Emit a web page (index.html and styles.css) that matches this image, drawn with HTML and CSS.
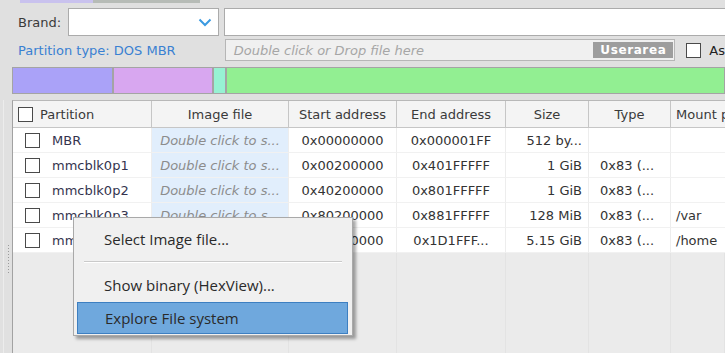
FILE: index.html
```html
<!DOCTYPE html>
<html lang="en">
<head>
    <meta charset="UTF-8">
    <title>Partition table</title>
    <link rel="stylesheet" href="styles.css">
</head>
<body>
    <div class="tabs"><span class="tab"></span><span class="tab tab-next"></span></div>

    <div class="form-row">
        <label class="field-label">Brand:</label>
        <div class="select">
            <svg width="14" height="9" viewBox="0 0 14 9"><polyline points="1.5,1.5 7,7 12.5,1.5" fill="none" stroke="#3b9ae1" stroke-width="2"/></svg>
        </div>
        <div class="text-input"></div>
    </div>

    <div class="form-row row-type">
        <span class="ptype">Partition type: DOS MBR</span>
        <div class="drop-field">
            <span class="placeholder">Double click or Drop file here</span>
            <span class="badge">Userarea</span>
        </div>
        <span class="check"></span>
        <span class="check-label">As</span>
    </div>

    <div class="partbar">
        <span class="seg seg-a"></span>
        <span class="seg seg-b"></span>
        <span class="seg seg-c"></span>
        <span class="seg seg-d"></span>
    </div>

    <div class="grid-area">
        <div class="gutter"><span class="grip"></span></div>
        <div class="table">
            <div class="tr thead">
                <div class="th th-part"><span class="check"></span>Partition</div>
                <div class="th">Image file</div>
                <div class="th">Start address</div>
                <div class="th">End address</div>
                <div class="th">Size</div>
                <div class="th">Type</div>
                <div class="th th-left">Mount point</div>
            </div>
            <div class="tr">
                <div class="td td-part"><span class="check"></span>MBR</div>
                <div class="td td-image">Double click to s...</div>
                <div class="td">0x00000000</div>
                <div class="td">0x000001FF</div>
                <div class="td td-size">512 by...</div>
                <div class="td td-type"></div>
                <div class="td td-mount"></div>
            </div>
            <div class="tr">
                <div class="td td-part"><span class="check"></span>mmcblk0p1</div>
                <div class="td td-image">Double click to s...</div>
                <div class="td">0x00200000</div>
                <div class="td">0x401FFFFF</div>
                <div class="td td-size">1 GiB</div>
                <div class="td td-type">0x83 (...</div>
                <div class="td td-mount"></div>
            </div>
            <div class="tr">
                <div class="td td-part"><span class="check"></span>mmcblk0p2</div>
                <div class="td td-image">Double click to s...</div>
                <div class="td">0x40200000</div>
                <div class="td">0x801FFFFF</div>
                <div class="td td-size">1 GiB</div>
                <div class="td td-type">0x83 (...</div>
                <div class="td td-mount"></div>
            </div>
            <div class="tr">
                <div class="td td-part"><span class="check"></span>mmcblk0p3</div>
                <div class="td td-image">Double click to s...</div>
                <div class="td">0x80200000</div>
                <div class="td">0x881FFFFF</div>
                <div class="td td-size">128 MiB</div>
                <div class="td td-type">0x83 (...</div>
                <div class="td td-mount">/var</div>
            </div>
            <div class="tr">
                <div class="td td-part"><span class="check"></span>mmcblk0p5</div>
                <div class="td td-image">Double click to s...</div>
                <div class="td">0x88200000</div>
                <div class="td">0x1D1FFF...</div>
                <div class="td td-size">5.15 GiB</div>
                <div class="td td-type">0x83 (...</div>
                <div class="td td-mount">/home</div>
            </div>
            <div class="tr filler">
                <div class="tf"></div><div class="tf"></div><div class="tf"></div><div class="tf"></div>
                <div class="tf"></div><div class="tf"></div><div class="tf"></div>
            </div>
        </div>
    </div>

    <!-- right-click menu over the table -->
    <div class="context-menu">
        <div class="menu-item item-first">Select Image file...</div>
        <div class="menu-sep"></div>
        <div class="menu-item">Show binary (HexView)...</div>
        <div class="menu-item menu-active">Explore File system</div>
    </div>
</body>
</html>
```

FILE: styles.css
```css
html, body {
    margin: 0;
    padding: 0;
}
body {
    position: relative;
    width: 725px;
    height: 353px;
    overflow: hidden;
    background-color: #e0e0e0;
    font-family: "DejaVu Sans", sans-serif;
    font-size: 13px;
    color: #333;
}

/* top tab strip, mostly cut off */
.tabs {
    display: flex;
    height: 3px;
    padding-left: 20px;
}
.tab {
    width: 73px;
    background-color: #c9c2ee;
}
.tab-next {
    width: 107px;
    background-color: #b7bcb7;
}

/* form rows */
.form-row {
    display: flex;
    align-items: center;
    margin-top: 5px;
    height: 28px;
}
.field-label {
    width: 50px;
    padding-left: 18px;
    color: #3a3a3a;
}
.select {
    width: 151px;
    height: 28px;
    box-sizing: border-box;
    background-color: #fff;
    border: 1px solid #ababab;
    display: flex;
    align-items: center;
    justify-content: flex-end;
    padding-right: 6px;
}
.text-input {
    flex: 1;
    margin-left: 5px;
    height: 28px;
    box-sizing: border-box;
    background-color: #fff;
    border: 1px solid #ababab;
    border-right: none;
}
.row-type {
    margin-top: 3px;
    height: 22px;
}
.ptype {
    width: 207px;
    padding-left: 18px;
    color: #3a80d2;
}
.drop-field {
    width: 451px;
    height: 22px;
    box-sizing: border-box;
    border: 1px solid #b6b6b6;
    background-color: #f0f0f0;
    display: flex;
    align-items: center;
    justify-content: space-between;
    padding: 0 1px 0 8px;
}
.placeholder {
    font-style: italic;
    color: #a6a6a6;
}
.badge {
    width: 80px;
    height: 16px;
    line-height: 16px;
    text-align: center;
    background-color: #9d9d9d;
    color: #fff;
    font-weight: bold;
    font-size: 12px;
    letter-spacing: 0.6px;
}
.check {
    display: inline-block;
    width: 15px;
    height: 15px;
    box-sizing: border-box;
    border: 1px solid #4a4a4a;
    background-color: #fff;
    flex-shrink: 0;
}
.row-type .check {
    margin-left: 11px;
}
.check-label {
    margin-left: 8px;
    color: #222;
}

/* partition bar */
.partbar {
    display: flex;
    gap: 2px;
    margin: 6px 0 0 12px;
    height: 27px;
    box-sizing: border-box;
    padding: 1px;
    background-color: #a4a4a4;
}
.seg-a { width: 99px; background-color: #aaa2f8; }
.seg-b { width: 98px; background-color: #d8a7f0; }
.seg-c { width: 11px; background-color: #97f2d3; }
.seg-d { flex: 1; background-color: #92ef92; }

/* table */
.grid-area {
    display: flex;
    margin-top: 6px;
    height: 253px;
}
.gutter {
    position: relative;
    width: 9px;
    flex-shrink: 0;
    border-left: 1px solid #ececec;
    margin-left: 3px;
    box-sizing: border-box;
}
.grip {
    position: absolute;
    left: 4px;
    top: 145px;
    width: 1px;
    height: 28px;
    background-image: linear-gradient(#9a9a9a 50%, transparent 50%);
    background-size: 1px 3px;
}
.table {
    flex: 1;
    display: flex;
    flex-direction: column;
    border-left: 1px solid #a2a2a2;
    border-top: 1px solid #b8b8b8;
    background-color: #ebebeb;
}
.tr {
    display: grid;
    grid-template-columns: 139px 137px 108px 109px 83px 82px 1fr;
    height: 25px;
}
.thead {
    height: 27px;
}
.th {
    display: flex;
    align-items: center;
    justify-content: center;
    background-color: #f4f4f4;
    border-right: 1px solid #c6c6c6;
    border-bottom: 1px solid #c6c6c6;
    color: #3a3a3a;
    white-space: nowrap;
    overflow: hidden;
}
.th-part {
    justify-content: flex-start;
    padding-left: 5px;
    gap: 7px;
}
.th-left {
    justify-content: flex-start;
    padding-left: 5px;
    border-right: none;
}
.td {
    display: flex;
    align-items: center;
    justify-content: center;
    background-color: #fff;
    border-right: 1px solid #ededed;
    border-bottom: 1px solid #f1f1f1;
    white-space: nowrap;
    overflow: hidden;
    color: #333;
}
.td-part {
    justify-content: flex-start;
    padding-left: 12px;
    gap: 12px;
    color: #34344e;
}
.td-image {
    background-color: #e1eefc;
    font-style: italic;
    color: #8c8c8c;
}
.td-size {
    justify-content: flex-end;
    padding-right: 6px;
}
.td-type {
    justify-content: flex-start;
    padding-left: 11px;
}
.td-mount {
    justify-content: flex-start;
    padding-left: 5px;
    border-right: none;
}
.filler {
    flex: 1;
}
.tf {
    border-right: 1px solid #e3e3e3;
}

/* context menu */
.context-menu {
    position: absolute;
    left: 73px;
    top: 217px;
    width: 280px;
    height: 119px;
    box-sizing: border-box;
    padding: 3px 4px 3px 3px;
    background-color: #f0f0f0;
    border: 1px solid #a9a9a9;
    box-shadow: 3px 3px 3px rgba(0, 0, 0, 0.35);
    font-family: "Open Sans", sans-serif;
    font-size: 15px;
    color: #2a2a2a;
}
.menu-item {
    height: 33px;
    line-height: 33px;
    padding-left: 27px;
    box-sizing: border-box;
}
.item-first {
    height: 36px;
    line-height: 36px;
}
.menu-sep {
    height: 1px;
    margin: 4px 6px 6px 7px;
    background-color: #cacaca;
    border-bottom: 1px solid #fff;
}
.menu-active {
    height: 32px;
    line-height: 30px;
    background-color: #6fa8dd;
    border: 1px solid #3d7fc1;
}
```
